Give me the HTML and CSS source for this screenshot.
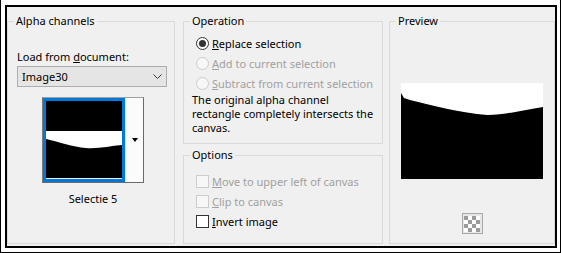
FILE: index.html
```html
<!DOCTYPE html>
<html lang="en">
<head>
	<meta charset="UTF-8">
	<title>Load selection from alpha channel</title>
	<link rel="stylesheet" href="styles.css">
</head>
<body>
	<div class="frame">
		<div class="dialog">
			<fieldset class="group alpha">
				<legend>Alpha channels</legend>
				<div class="label">Load from <u>d</u>ocument:</div>
				<div class="select">
					<span>Image30</span>
					<svg class="chevron" width="9" height="5" viewBox="0 0 9 5"><path d="M0.5 0.5 L4.5 4.5 L8.5 0.5" fill="none" stroke="#333" stroke-width="1"/></svg>
				</div>
				<div class="thumb-wrap">
					<div class="thumb">
						<svg width="76" height="77" viewBox="0 0 76 77">
							<rect width="76" height="77" fill="#000"/>
							<path d="M0 30 H76 V44 C64 45 52 48 40 47 C26 46 14 41 0 38 Z" fill="#fff"/>
						</svg>
					</div>
					<div class="thumb-btn"><span class="tri"></span></div>
				</div>
				<div class="caption">Selectie 5</div>
			</fieldset>

			<div class="middle">
				<fieldset class="group operation">
					<legend>Operation</legend>
					<div class="row first"><span class="radio on"></span><span><u>R</u>eplace selection</span></div>
					<div class="row off"><span class="radio"></span><span><u>A</u>dd to current selection</span></div>
					<div class="row off"><span class="radio"></span><span><u>S</u>ubtract from current selection</span></div>
					<p class="desc">The original alpha channel rectangle completely intersects the canvas.</p>
				</fieldset>
				<fieldset class="group options">
					<legend>Options</legend>
					<div class="row first off"><span class="check"></span><span><u>M</u>ove to upper left of canvas</span></div>
					<div class="row off"><span class="check"></span><span><u>C</u>lip to canvas</span></div>
					<div class="row"><span class="check on"></span><span><u>I</u>nvert image</span></div>
				</fieldset>
			</div>

			<fieldset class="group preview">
				<legend>Preview</legend>
				<svg class="preview-img" width="142" height="96" viewBox="0 0 142 96">
					<rect width="142" height="96" fill="#fff"/>
					<path d="M0 10 L3 15 L9 17 C30 22 60 30 86 32 C105 32 122 27 142 24 V96 H0 Z" fill="#000"/>
				</svg>
				<div class="checker">
					<svg width="16" height="16" viewBox="0 0 16 16">
						<rect width="16" height="16" fill="#fff"/>
						<path d="M0 0h4v4H0zM8 0h4v4H8zM4 4h4v4H4zM12 4h4v4h-4zM0 8h4v4H0zM8 8h4v4H8zM4 12h4v4H4zM12 12h4v4h-4z" fill="#9a9a9a"/>
					</svg>
				</div>
			</fieldset>
		</div>
	</div>
</body>
</html>
```

FILE: styles.css
```css
html,
body {
	margin: 0;
	padding: 0;
	background: #fff;
}
body {
	font-family: "Noto Sans", "Open Sans", sans-serif;
	font-size: 11px;
	color: #000;
}
.frame {
	width: 561px;
	height: 253px;
	box-sizing: border-box;
	border: 1px solid #000;
	border-top: none;
	padding: 5px 3px 4px 4px;
	background: #fff;
}
.dialog {
	display: flex;
	height: 100%;
	box-sizing: border-box;
	border: 2px solid #000;
	background: #f0f0f0;
	padding-top: 6px;
}
.group {
	margin: 0;
	padding: 0;
	min-width: 0;
	box-sizing: border-box;
	border: 1px solid #dadada;
}
.group legend {
	margin-left: 6px;
	padding: 0 2px;
	line-height: 16px;
}
.alpha {
	width: 168px;
	height: 231px;
}
.label {
	margin: 20px 0 0 9px;
	line-height: 16px;
}
.select {
	display: flex;
	align-items: center;
	justify-content: space-between;
	width: 150px;
	height: 21px;
	box-sizing: border-box;
	margin: 1px 0 0 9px;
	padding: 0 4px 0 4px;
	border: 1px solid #adadad;
	background: #e5e5e5;
}
.thumb-wrap {
	display: flex;
	width: 102px;
	height: 86px;
	box-sizing: border-box;
	margin: 10px 0 0 34px;
	border: 1px solid;
	border-color: #a0a0a0 #6a6a6a #6a6a6a #7a7a7a;
}
.thumb {
	border: 3px solid #0078d7;
	line-height: 0;
}
.thumb-btn {
	flex: 1;
	display: flex;
	justify-content: center;
	padding-top: 40px;
	background: #fbfbfb;
	border-left: 1px solid #e3e3e3;
}
.tri {
	width: 0;
	height: 0;
	border-left: 3px solid transparent;
	border-right: 3px solid transparent;
	border-top: 4px solid #000;
}
.caption {
	width: 102px;
	margin: 8px 0 0 34px;
	text-align: center;
	line-height: 16px;
}
.middle {
	display: flex;
	flex-direction: column;
	margin-left: 8px;
	width: 200px;
}
.operation {
	height: 131px;
}
.options {
	height: 97px;
	margin-top: 3px;
}
.row {
	display: flex;
	align-items: center;
	gap: 3px;
	height: 20px;
	margin-left: 12px;
}
.row.first {
	margin-top: 4px;
}
.options .row.first {
	margin-top: 8px;
}
.row.off {
	color: #a0a0a0;
}
.radio {
	width: 13px;
	height: 13px;
	box-sizing: border-box;
	border: 1px solid #cccccc;
	border-radius: 50%;
	background: #f7f7f7;
	display: flex;
	align-items: center;
	justify-content: center;
}
.radio.on {
	border-color: #333;
	background: #fff;
}
.radio.on::after {
	content: "";
	width: 7px;
	height: 7px;
	border-radius: 50%;
	background: #333;
}
.check {
	width: 13px;
	height: 13px;
	box-sizing: border-box;
	border: 1px solid #cccccc;
	background: #f7f7f7;
}
.check.on {
	border-color: #333;
	background: #fff;
}
.desc {
	margin: 0 6px 0 8px;
	line-height: 14px;
}
.preview {
	width: 166px;
	height: 231px;
	margin-left: 6px;
	display: flex;
	flex-direction: column;
	align-items: center;
}
.preview-img {
	display: block;
	margin-top: 54px;
}
.checker {
	margin-top: 34px;
	width: 21px;
	height: 21px;
	box-sizing: border-box;
	border: 1px solid #a8a8a8;
	background: #e6e6e6;
	display: flex;
	align-items: center;
	justify-content: center;
}
```
